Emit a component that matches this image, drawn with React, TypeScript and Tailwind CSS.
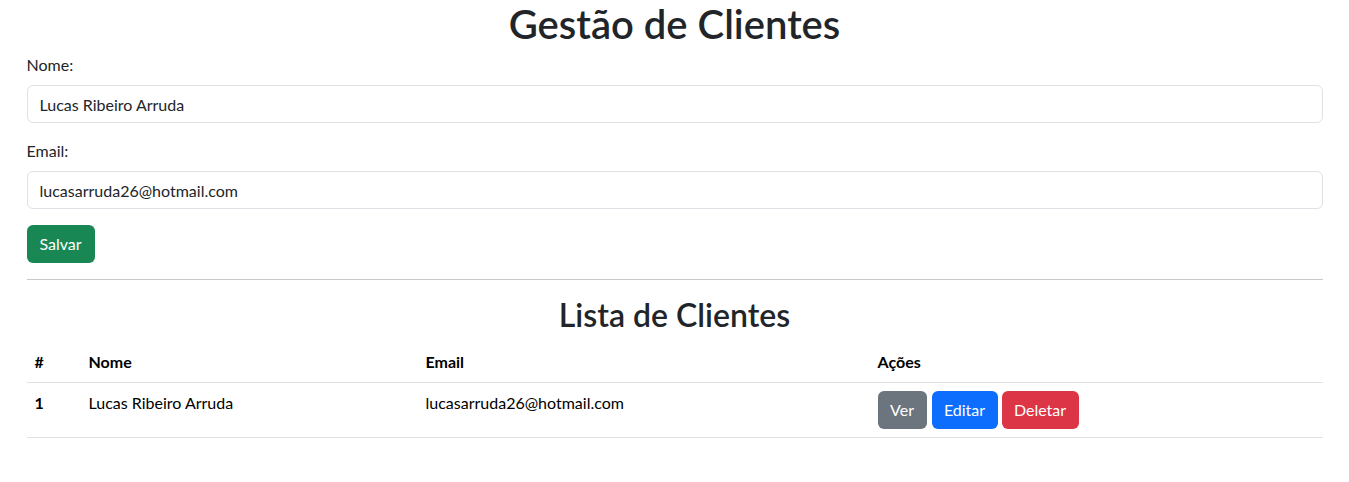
import React from 'react';

const clientes = [
    { id: 1, nome: 'Lucas Ribeiro Arruda', email: 'lucasarruda26@hotmail.com' },
];

const App: React.FC = () => {
    return (
        <div className="min-h-screen bg-white text-[#212529] font-['Lato','Noto_Sans',sans-serif] text-base">
            <div className="mx-auto w-full max-w-[1320px] px-3">
                <h1 className="h-[48px] text-center text-[40px] font-semibold leading-[48px] mb-[5px]">Gestão de Clientes</h1>

                <form className="flex flex-col" onSubmit={(e) => e.preventDefault()}>
                    <div className="mb-4 flex flex-col">
                        <label className="mb-2 leading-6">Nome:</label>
                        <input
                            className="h-[38px] rounded-[6px] border border-[#dee2e6] px-3 text-base text-[#212529] outline-none"
                            defaultValue="Lucas Ribeiro Arruda"
                        />
                    </div>
                    <div className="mb-4 flex flex-col">
                        <label className="mb-2 leading-6">Email:</label>
                        <input
                            className="h-[38px] rounded-[6px] border border-[#dee2e6] px-3 text-base text-[#212529] outline-none"
                            defaultValue="lucasarruda26@hotmail.com"
                        />
                    </div>
                    <div>
                        <button className="h-[38px] w-[68px] rounded-[6px] bg-[#198754] text-white leading-6">Salvar</button>
                    </div>
                </form>

                <hr className="my-4 border-t border-[#c8c9ca]" />

                <h2 className="mb-2 text-center text-[32px] font-semibold leading-[38px]">Lista de Clientes</h2>

                <table className="w-full border-collapse text-black">
                    <thead>
                        <tr className="border-b border-[#dee2e6]">
                            <th className="w-[54px] p-2 text-left font-bold leading-6">#</th>
                            <th className="w-[337px] p-2 text-left font-bold leading-6">Nome</th>
                            <th className="w-[452px] p-2 text-left font-bold leading-6">Email</th>
                            <th className="p-2 text-left font-bold leading-6">Ações</th>
                        </tr>
                    </thead>
                    <tbody>
                        {clientes.map((c) => (
                            <tr key={c.id} className="border-b border-[#dee2e6] align-top">
                                <td className="p-2 font-bold leading-6">{c.id}</td>
                                <td className="p-2 leading-6">{c.nome}</td>
                                <td className="p-2 leading-6">{c.email}</td>
                                <td className="p-2">
                                    <div className="flex">
                                        <button className="h-[38px] w-[49px] rounded-[6px] bg-[#6c757d] text-white">Ver</button>
                                        <button className="ml-[5px] h-[38px] w-[66px] rounded-[6px] bg-[#0d6efd] text-white">Editar</button>
                                        <button className="ml-[4px] h-[38px] w-[77px] rounded-[6px] bg-[#dc3545] text-white">Deletar</button>
                                    </div>
                                </td>
                            </tr>
                        ))}
                    </tbody>
                </table>
            </div>
        </div>
    );
};

export default App;
